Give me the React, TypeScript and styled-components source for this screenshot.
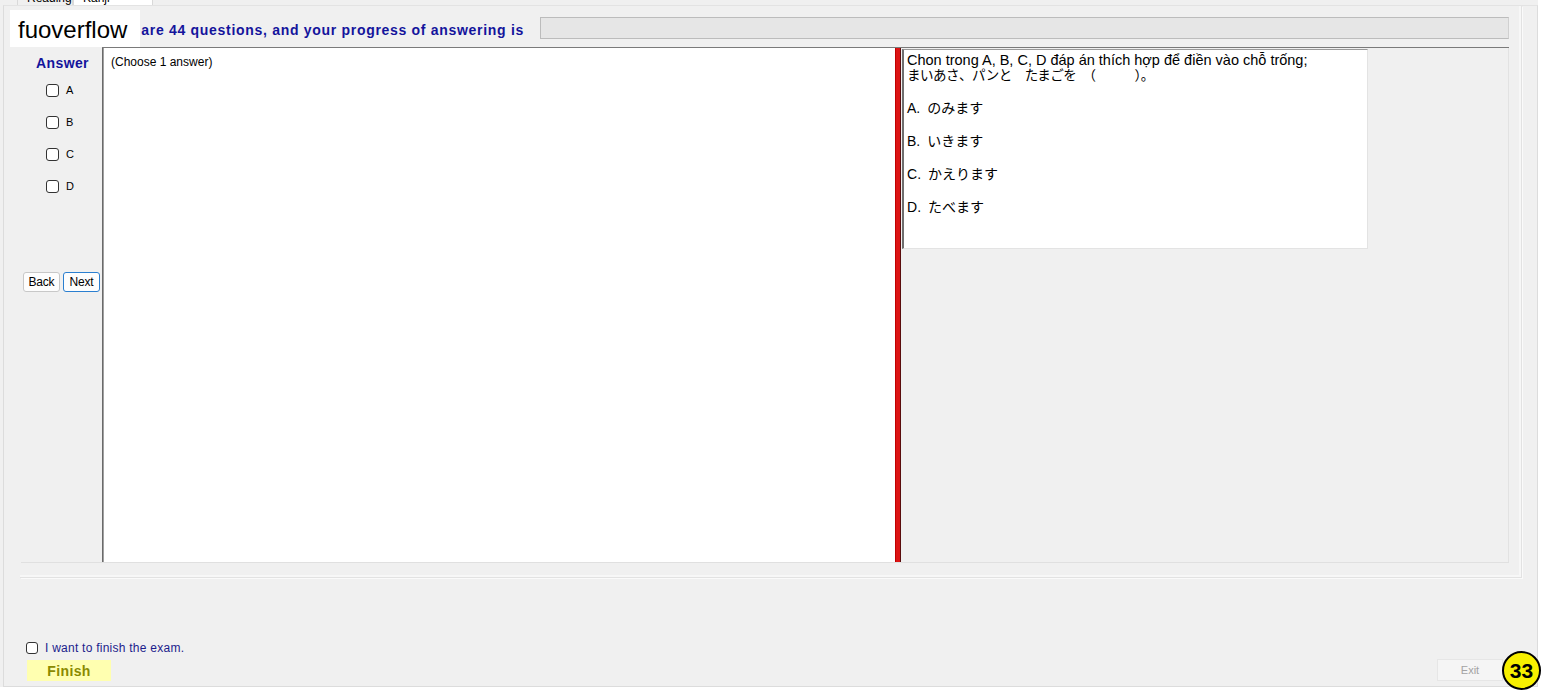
import React from 'react';
import styled, {createGlobalStyle} from 'styled-components';

const GlobalStyle = createGlobalStyle`
  html, body {
    margin: 0;
    padding: 0;
    background: #ffffff;
  }
  body {
    font-family: "Liberation Sans", Arial, sans-serif;
    color: #000;
  }
`;

const Screen = styled.div`
  position: relative;
  width: 1542px;
  height: 690px;
  background: #ffffff;
  overflow: hidden;
`;

const TabControl = styled.div`
  width: 1538px;
  height: 687px;
  display: flex;
  flex-direction: column;
  background: #f0f0f0;
`;

const TabStrip = styled.div`
  height: 5px;
  overflow: hidden;
  display: flex;
  align-items: flex-end;
  padding-left: 17px;
  background: #f0f0f0;
`;

const Tab = styled.div<{$active?: boolean; $width: number}>`
  flex: none;
  width: ${(p) => p.$width}px;
  height: 20px;
  box-sizing: border-box;
  border: 1px solid #d9d9d9;
  border-bottom: none;
  background: ${(p) => (p.$active ? '#ffffff' : '#f0f0f0')};
  font-size: 12px;
  line-height: 14px;
  padding: 5px 0 0 9px;
  color: #000;
`;

const TabPage = styled.div`
  flex: 1;
  margin-left: 3px;
  display: flex;
  flex-direction: column;
  border: 1px solid #dcdcdc;
  border-top-color: #e3e3e3;
  background: #f0f0f0;
`;

const Group = styled.div`
  margin-left: 16px;
  width: 1502px;
  height: 572px;
  box-sizing: border-box;
  border-right: 1px solid #e2e2e2;
  border-bottom: 1px solid #e2e2e2;
  box-shadow: 1px 1px 0 #fafafa, inset -2px -2px 0 #f7f7f7;
  padding: 11px 12px 0 1px;
  display: flex;
  flex-direction: column;
`;

const Header = styled.div`
  height: 22px;
  display: flex;
  align-items: center;
  gap: 16px;
`;

const HeaderLabel = styled.div`
  width: 503px;
  text-align: right;
  font-size: 14px;
  letter-spacing: 0.7px;
  font-weight: bold;
  color: #14149c;
  white-space: nowrap;
  padding-top: 3px;
`;

const Progress = styled.div`
  flex: 1;
  height: 22px;
  box-sizing: border-box;
  background: #e6e6e6;
  border: 1px solid #bcbcbc;
  border-right-color: #d0d0d0;
`;

const MainPanel = styled.div`
  margin-top: 8px;
  height: 515px;
  display: flex;
  border-bottom: 1px solid #e0e0e0;
`;

const AnswerColumn = styled.div`
  width: 81px;
  flex: none;
  display: flex;
  flex-direction: column;
  padding-top: 8px;
`;

const AnswerTitle = styled.div`
  font-size: 14px;
  letter-spacing: 0.4px;
  font-weight: bold;
  color: #14149c;
  text-align: center;
  padding-left: 2px;
  line-height: 16px;
`;

const OptionList = styled.div`
  display: flex;
  flex-direction: column;
  padding-left: 25px;
  margin-top: 3px;
`;

const OptionRow = styled.label`
  height: 32px;
  display: flex;
  align-items: center;
  gap: 7px;
  font-size: 11px;
  color: #000;
`;

const Box = styled.span<{$size?: number}>`
  display: inline-block;
  width: ${(p) => p.$size ?? 13}px;
  height: ${(p) => p.$size ?? 13}px;
  box-sizing: border-box;
  border: 1px solid #333333;
  border-radius: 3px;
  background: #ffffff;
  flex: none;
`;

const NavRow = styled.div`
  margin-top: 70px;
  display: flex;
  gap: 3px;
  padding-left: 2px;
`;

const NavButton = styled.button<{$focus?: boolean}>`
  width: 37px;
  height: 20px;
  padding: 0;
  box-sizing: border-box;
  font-family: "Liberation Sans", Arial, sans-serif;
  font-size: 12px;
  letter-spacing: -0.2px;
  color: #000;
  background: #fdfdfd;
  border: 1px solid ${(p) => (p.$focus ? '#2b7fd0' : '#c8c8c8')};
  border-radius: 3px;
`;

const SplitContainer = styled.div`
  flex: 1;
  display: flex;
  border-top: 1px solid #7a7a7a;
  box-shadow: inset 0 1px 0 #a8a8a8;
`;

const QuestionPane = styled.div`
  width: 793px;
  flex: none;
  box-sizing: border-box;
  background: #ffffff;
  border-left: 1px solid #6a6a6a;
  box-shadow: inset 1px 0 0 #a0a0a0;
  padding: 7px 0 0 8px;
  font-size: 12px;
  color: #000;
`;

const Splitter = styled.div`
  width: 6px;
  flex: none;
  box-sizing: border-box;
  background: #dc1414;
  border-left: 1px solid #c00000;
  border-right: 1px solid #5a0d0d;
`;

const ContentPane = styled.div`
  flex: 1;
  background: #f0f0f0;
  padding: 1px 0 0 1px;
  border-right: 1px solid #e2e2e2;
`;

const ContentBox = styled.div`
  width: 466px;
  height: 200px;
  box-sizing: border-box;
  background: #ffffff;
  border-left: 2px solid #6e6e6e;
  border-top: 1px solid #9a9a9a;
  border-right: 1px solid #e3e3e3;
  border-bottom: 1px solid #e3e3e3;
  padding: 3px 0 0 3px;
  font-size: 14.5px;
  line-height: 15px;
  color: #000;
  font-family: "Liberation Sans", "Noto Sans CJK JP", sans-serif;
`;

const JapaneseLine = styled.div`
  font-size: 13.5px;
  letter-spacing: -0.5px;
`;

const Choice = styled.div`
  margin-top: 18px;
  display: flex;
  gap: 7px;
  font-size: 14px;

  &:first-of-type {
    margin-top: 19px;
  }
`;

const Footer = styled.div`
  flex: 1;
  display: flex;
  justify-content: space-between;
  align-items: flex-end;
  padding: 0 34px 5px 22px;
`;

const FinishBlock = styled.div`
  display: flex;
  flex-direction: column;
  gap: 4px;
`;

const ConfirmRow = styled.label`
  display: flex;
  align-items: center;
  gap: 7px;
  font-size: 12px;
  letter-spacing: 0.25px;
  color: #1c1c8c;
  height: 16px;
`;

const FinishButton = styled.button`
  margin-left: 1px;
  width: 84px;
  height: 21px;
  padding: 0;
  border: none;
  background: #ffffb0;
  color: #8a8a00;
  font-family: "Liberation Sans", Arial, sans-serif;
  font-size: 14px;
  letter-spacing: 0.4px;
  font-weight: bold;
`;

const ExitButton = styled.button`
  width: 66px;
  height: 22px;
  padding: 0;
  box-sizing: border-box;
  border: 1px solid #e6e6e6;
  background: #f5f5f5;
  color: #a3a3a3;
  font-family: "Liberation Sans", Arial, sans-serif;
  font-size: 11px;
`;

const Watermark = styled.div`
  position: absolute;
  left: 10px;
  top: 10px;
  width: 130px;
  height: 37px;
  background: #ffffff;
  font-size: 24px;
  line-height: 40px;
  padding-left: 8px;
  box-sizing: border-box;
  color: #000;
`;

const Badge = styled.div`
  position: absolute;
  right: 1px;
  bottom: 0;
  width: 39px;
  height: 39px;
  box-sizing: border-box;
  border-radius: 50%;
  border: 2px solid #000;
  background: #f7ef00;
  display: flex;
  align-items: center;
  justify-content: center;
  font-size: 21px;
  font-weight: bold;
  color: #000;
`;

const options = ['A', 'B', 'C', 'D'];

const choices = [
  {key: 'A', text: 'のみます'},
  {key: 'B', text: 'いきます'},
  {key: 'C', text: 'かえります'},
  {key: 'D', text: 'たべます'},
];

export default function App() {
  return (
    <Screen>
      <GlobalStyle />
      <TabControl>
        <TabStrip>
          <Tab $width={56}>Reading</Tab>
          <Tab $width={80} $active>
            Kanji
          </Tab>
        </TabStrip>
        <TabPage>
          <Group>
            <Header>
              <HeaderLabel>There are 44 questions, and your progress of answering is</HeaderLabel>
              <Progress />
            </Header>
            <MainPanel>
              <AnswerColumn>
                <AnswerTitle>Answer</AnswerTitle>
                <OptionList>
                  {options.map((o) => (
                    <OptionRow key={o}>
                      <Box />
                      {o}
                    </OptionRow>
                  ))}
                </OptionList>
                <NavRow>
                  <NavButton>Back</NavButton>
                  <NavButton $focus>Next</NavButton>
                </NavRow>
              </AnswerColumn>
              <SplitContainer>
                <QuestionPane>(Choose 1 answer)</QuestionPane>
                <Splitter />
                <ContentPane>
                  <ContentBox>
                    <div>Chon trong A, B, C, D đáp án thích hợp để điền vào chỗ trống;</div>
                    <JapaneseLine>まいあさ、パンと　たまごを　（　　　）。</JapaneseLine>
                    {choices.map((c) => (
                      <Choice key={c.key}>
                        <span>{c.key}.</span>
                        <span>{c.text}</span>
                      </Choice>
                    ))}
                  </ContentBox>
                </ContentPane>
              </SplitContainer>
            </MainPanel>
          </Group>
          <Footer>
            <FinishBlock>
              <ConfirmRow>
                <Box $size={12} />
                I want to finish the exam.
              </ConfirmRow>
              <FinishButton>Finish</FinishButton>
            </FinishBlock>
            <ExitButton>Exit</ExitButton>
          </Footer>
        </TabPage>
      </TabControl>
      <Watermark>fuoverflow</Watermark>
      <Badge>33</Badge>
    </Screen>
  );
}
